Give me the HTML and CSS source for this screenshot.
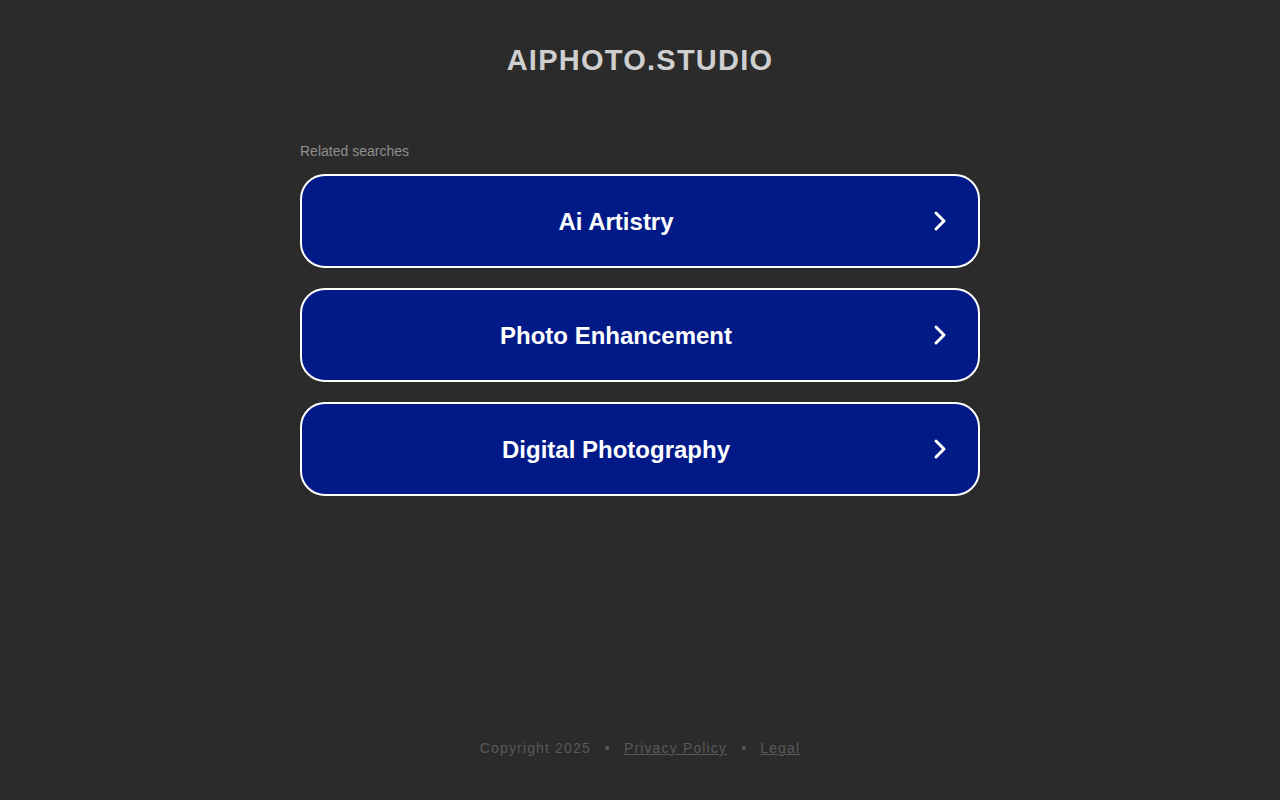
FILE: index.html
```html
<!DOCTYPE html>
<html>
<head>
<meta charset="utf-8">
<link rel="stylesheet" href="styles.css">
</head>
<body>
<div class="page">
  <header class="header">
    <h1 class="title">AIPHOTO.STUDIO</h1>
  </header>
  <main class="main">
    <div class="related">Related searches</div>
    <div class="list">
      <a class="item" href="#"><span class="label">Ai Artistry</span><svg class="chev" viewBox="0 0 16 24" width="16" height="24"><path d="M4 4 L12 12 L4 20" fill="none" stroke="#fff" stroke-width="3" stroke-linecap="round" stroke-linejoin="round"/></svg></a>
      <a class="item" href="#"><span class="label">Photo Enhancement</span><svg class="chev" viewBox="0 0 16 24" width="16" height="24"><path d="M4 4 L12 12 L4 20" fill="none" stroke="#fff" stroke-width="3" stroke-linecap="round" stroke-linejoin="round"/></svg></a>
      <a class="item" href="#"><span class="label">Digital Photography</span><svg class="chev" viewBox="0 0 16 24" width="16" height="24"><path d="M4 4 L12 12 L4 20" fill="none" stroke="#fff" stroke-width="3" stroke-linecap="round" stroke-linejoin="round"/></svg></a>
    </div>
  </main>
  <footer class="footer">
    <span>Copyright 2025</span><span class="dot">•</span><a href="#">Privacy Policy</a><span class="dot">•</span><a href="#">Legal</a>
  </footer>
</div>
</body>
</html>
```
FILE: styles.css
```css
html, body {
  margin: 0;
  padding: 0;
  background: #2b2b2b;
  font-family: "Liberation Sans", Arial, sans-serif;
}
.page {
  height: 800px;
  display: flex;
  flex-direction: column;
  align-items: center;
}
.header {
  padding-top: 42px;
  height: 100px;
  box-sizing: border-box;
}
.title {
  margin: 0;
  font-size: 29px;
  line-height: 36px;
  font-weight: bold;
  letter-spacing: 1.25px;
  color: #cfcfcf;
}
.main {
  width: 680px;
  padding-top: 42px;
}
.related {
  font-size: 14px;
  line-height: 18px;
  color: #8f8f8f;
  margin-bottom: 14px;
}
.list {
  display: flex;
  flex-direction: column;
  gap: 20px;
}
.item {
  display: flex;
  align-items: center;
  height: 94px;
  box-sizing: border-box;
  border: 2px solid #ffffff;
  border-radius: 25px;
  background: #011a88;
  text-decoration: none;
  padding: 2px 30px 0 0;
}
.label {
  flex: 1;
  text-align: center;
  color: #ffffff;
  font-size: 24px;
  font-weight: bold;
  margin-right: 2px;
}
.chev {
  display: block;
  margin-top: -2px;
}
.footer {
  margin-top: auto;
  margin-bottom: 44px;
  font-size: 14px;
  letter-spacing: 1.15px;
  color: #595959;
  display: flex;
  align-items: center;
}
.footer a {
  color: #595959;
}
.dot {
  margin: 0 13px 0 14px;
}
```
